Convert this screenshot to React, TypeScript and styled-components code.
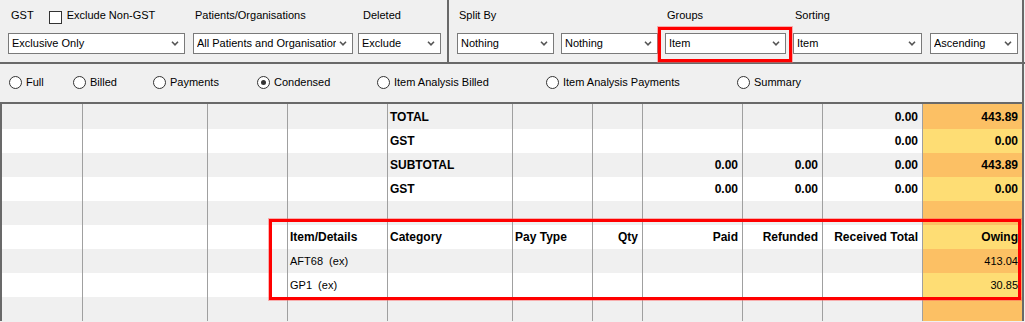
import React from 'react';
import styled, { createGlobalStyle } from 'styled-components';

const GlobalStyle = createGlobalStyle`
  html, body {
    margin: 0;
    padding: 0;
  }
  body {
    background: #F0F0F0;
    font-family: "Liberation Sans", Arial, sans-serif;
    font-size: 11px;
    color: #000;
  }
`;

const Screen = styled.div`
  position: relative;
  width: 1025px;
  height: 322px;
  overflow: hidden;
  background: #F0F0F0;
`;

const FilterBar = styled.div`
  display: flex;
  height: 62px;
  border-bottom: 2px solid #696969;
`;

const FilterGroup = styled.div<{ $width: number; $gap: number }>`
  width: ${p => p.$width}px;
  flex-shrink: 0;
  box-sizing: border-box;
  display: flex;
  gap: ${p => p.$gap}px;
  padding: 9px 0 0 8px;
  border-right: 2px solid #696969;
`;

const Field = styled.div<{ $width?: number }>`
  display: flex;
  flex-direction: column;
  gap: 11px;
  width: ${p => (p.$width ? `${p.$width}px` : 'auto')};
  flex-shrink: 0;
`;

const FieldLabel = styled.div<{ $indent: number }>`
  display: flex;
  align-items: flex-start;
  height: 13px;
  line-height: 13px;
  padding-left: ${p => p.$indent}px;
  white-space: nowrap;
`;

const CheckBox = styled.span`
  width: 13px;
  height: 13px;
  box-sizing: border-box;
  margin: 2px 5px 0 15px;
  border: 1px solid #333;
  background: #fff;
  flex-shrink: 0;
`;

const ComboRow = styled.div<{ $gap?: number }>`
  display: flex;
  gap: ${p => p.$gap ?? 7}px;
`;

const Combo = styled.div<{ $width: number }>`
  width: ${p => p.$width}px;
  height: 21px;
  box-sizing: border-box;
  display: flex;
  align-items: center;
  padding: 0 5px 0 3px;
  border: 1px solid #7A7A7A;
  background: #fff;
  flex-shrink: 0;
`;

const ComboText = styled.span`
  flex: 1;
  overflow: hidden;
  white-space: nowrap;
  line-height: 13px;
`;

const Chevron = styled.svg`
  flex-shrink: 0;
  margin-left: 3px;
`;

const RadioBar = styled.div`
  display: flex;
  align-items: flex-start;
  height: 40px;
  width: 1024px;
  box-sizing: border-box;
  padding: 12px 0 0 9px;
  border-bottom: 2px solid #696969;
  border-right: 2px solid #696969;
`;

const RadioItem = styled.label<{ $width?: number }>`
  display: flex;
  align-items: center;
  gap: 4px;
  width: ${p => (p.$width ? `${p.$width}px` : 'auto')};
  flex-shrink: 0;
  line-height: 13px;
`;

const RadioCircle = styled.span<{ $checked?: boolean }>`
  position: relative;
  width: 13px;
  height: 13px;
  box-sizing: border-box;
  border: 1px solid #333;
  border-radius: 50%;
  background: #fff;
  flex-shrink: 0;

  &::after {
    content: '';
    display: ${p => (p.$checked ? 'block' : 'none')};
    position: absolute;
    left: 3px;
    top: 3px;
    width: 5px;
    height: 5px;
    border-radius: 50%;
    background: #333;
  }
`;

const COLUMNS = '81px 125px 80px 100px 125px 80px 50px 100px 80px 100px 99px';

const Grid = styled.div`
  width: 1024px;
  box-sizing: border-box;
  border-left: 2px solid #696969;
  border-right: 2px solid #696969;
`;

const GridRow = styled.div<{ $shade: boolean; $height: number }>`
  display: grid;
  grid-template-columns: ${COLUMNS};
  height: ${p => p.$height}px;
  background: ${p => (p.$shade ? '#F0F0F0' : '#FFFFFF')};
`;

const Cell = styled.div<{ $right?: boolean; $bold?: boolean; $owing?: boolean; $shade: boolean }>`
  display: flex;
  align-items: center;
  justify-content: ${p => (p.$right ? 'flex-end' : 'flex-start')};
  box-sizing: border-box;
  padding: 0 ${p => (p.$right ? 4 : 2)}px 0 2px;
  border-right: ${p => (p.$owing ? 'none' : '1px solid #A0A0A0')};
  background: ${p => (p.$owing ? (p.$shade ? '#FCC064' : '#FEDD74') : 'transparent')};
  font-size: ${p => (p.$bold ? 12 : 11)}px;
  font-weight: ${p => (p.$bold ? 700 : 400)};
  white-space: pre;
  overflow: hidden;
`;

const Highlight = styled.div<{ $left: number; $top: number; $width: number; $height: number }>`
  position: absolute;
  left: ${p => p.$left}px;
  top: ${p => p.$top}px;
  width: ${p => p.$width}px;
  height: ${p => p.$height}px;
  box-sizing: border-box;
  border: 3px solid #FF0000;
  box-shadow: 0 0 0 1px rgba(255, 90, 90, 0.45);
  pointer-events: none;
`;

const ChevronIcon = () => (
  <Chevron width="8" height="5" viewBox="0 0 8 5">
    <polyline points="1,0.8 4,3.8 7,0.8" fill="none" stroke="#555" strokeWidth="1.6" />
  </Chevron>
);

const Select = ({ width, value }: { width: number; value: string }) => (
  <Combo $width={width}>
    <ComboText>{value}</ComboText>
    <ChevronIcon />
  </Combo>
);

type RowKind = 'total' | 'blank' | 'header' | 'item';

const rows: { kind: RowKind; cells: string[] }[] = [
  { kind: 'total', cells: ['', '', '', '', 'TOTAL', '', '', '', '', '0.00', '443.89'] },
  { kind: 'total', cells: ['', '', '', '', 'GST', '', '', '', '', '0.00', '0.00'] },
  { kind: 'total', cells: ['', '', '', '', 'SUBTOTAL', '', '', '0.00', '0.00', '0.00', '443.89'] },
  { kind: 'total', cells: ['', '', '', '', 'GST', '', '', '0.00', '0.00', '0.00', '0.00'] },
  { kind: 'blank', cells: Array(11).fill('') },
  {
    kind: 'header',
    cells: ['', '', '', 'Item/Details', 'Category', 'Pay Type', 'Qty', 'Paid', 'Refunded', 'Received Total', 'Owing'],
  },
  { kind: 'item', cells: ['', '', '', 'AFT68  (ex)', '', '', '', '', '', '', '413.04'] },
  { kind: 'item', cells: ['', '', '', 'GP1  (ex)', '', '', '', '', '', '', '30.85'] },
  { kind: 'blank', cells: Array(11).fill('') },
];

const radios = [
  { label: 'Full', width: 64 },
  { label: 'Billed', width: 80 },
  { label: 'Payments', width: 104 },
  { label: 'Condensed', width: 120, checked: true },
  { label: 'Item Analysis Billed', width: 169 },
  { label: 'Item Analysis Payments', width: 191 },
  { label: 'Summary' },
];

const App: React.FC = () => {
  return (
    <Screen>
      <GlobalStyle />
      <FilterBar>
        <FilterGroup $width={449} $gap={0}>
          <Field $width={185}>
            <FieldLabel $indent={3}>
              GST
              <CheckBox />
              Exclude Non-GST
            </FieldLabel>
            <Select width={177} value="Exclusive Only" />
          </Field>
          <Field $width={165}>
            <FieldLabel $indent={2}>Patients/Organisations</FieldLabel>
            <Select width={160} value="All Patients and Organisations" />
          </Field>
          <Field>
            <FieldLabel $indent={5}>Deleted</FieldLabel>
            <Select width={83} value="Exclude" />
          </Field>
        </FilterGroup>
        <FilterGroup $width={575} $gap={7}>
          <Field>
            <FieldLabel $indent={2}>Split By</FieldLabel>
            <ComboRow>
              <Select width={97} value="Nothing" />
              <Select width={97} value="Nothing" />
            </ComboRow>
          </Field>
          <Field>
            <FieldLabel $indent={2}>Groups</FieldLabel>
            <Select width={121} value="Item" />
          </Field>
          <Field>
            <FieldLabel $indent={2}>Sorting</FieldLabel>
            <ComboRow $gap={8}>
              <Select width={129} value="Item" />
              <Select width={88} value="Ascending" />
            </ComboRow>
          </Field>
        </FilterGroup>
      </FilterBar>

      <RadioBar>
        {radios.map(r => (
          <RadioItem key={r.label} $width={r.width}>
            <RadioCircle $checked={r.checked} />
            {r.label}
          </RadioItem>
        ))}
      </RadioBar>

      <Grid>
        {rows.map((row, i) => {
          const shade = i % 2 === 0;
          const bold = row.kind === 'total' || row.kind === 'header';
          return (
            <GridRow key={i} $shade={shade} $height={i === 0 ? 25 : 24}>
              {row.cells.map((text, c) => (
                <Cell key={c} $shade={shade} $bold={bold} $right={c >= 6} $owing={c === 10}>
                  {text}
                </Cell>
              ))}
            </GridRow>
          );
        })}
      </Grid>

      <Highlight $left={658} $top={27} $width={134} $height={35} />
      <Highlight $left={269} $top={219} $width={752} $height={81} />
    </Screen>
  );
};

export default App;
